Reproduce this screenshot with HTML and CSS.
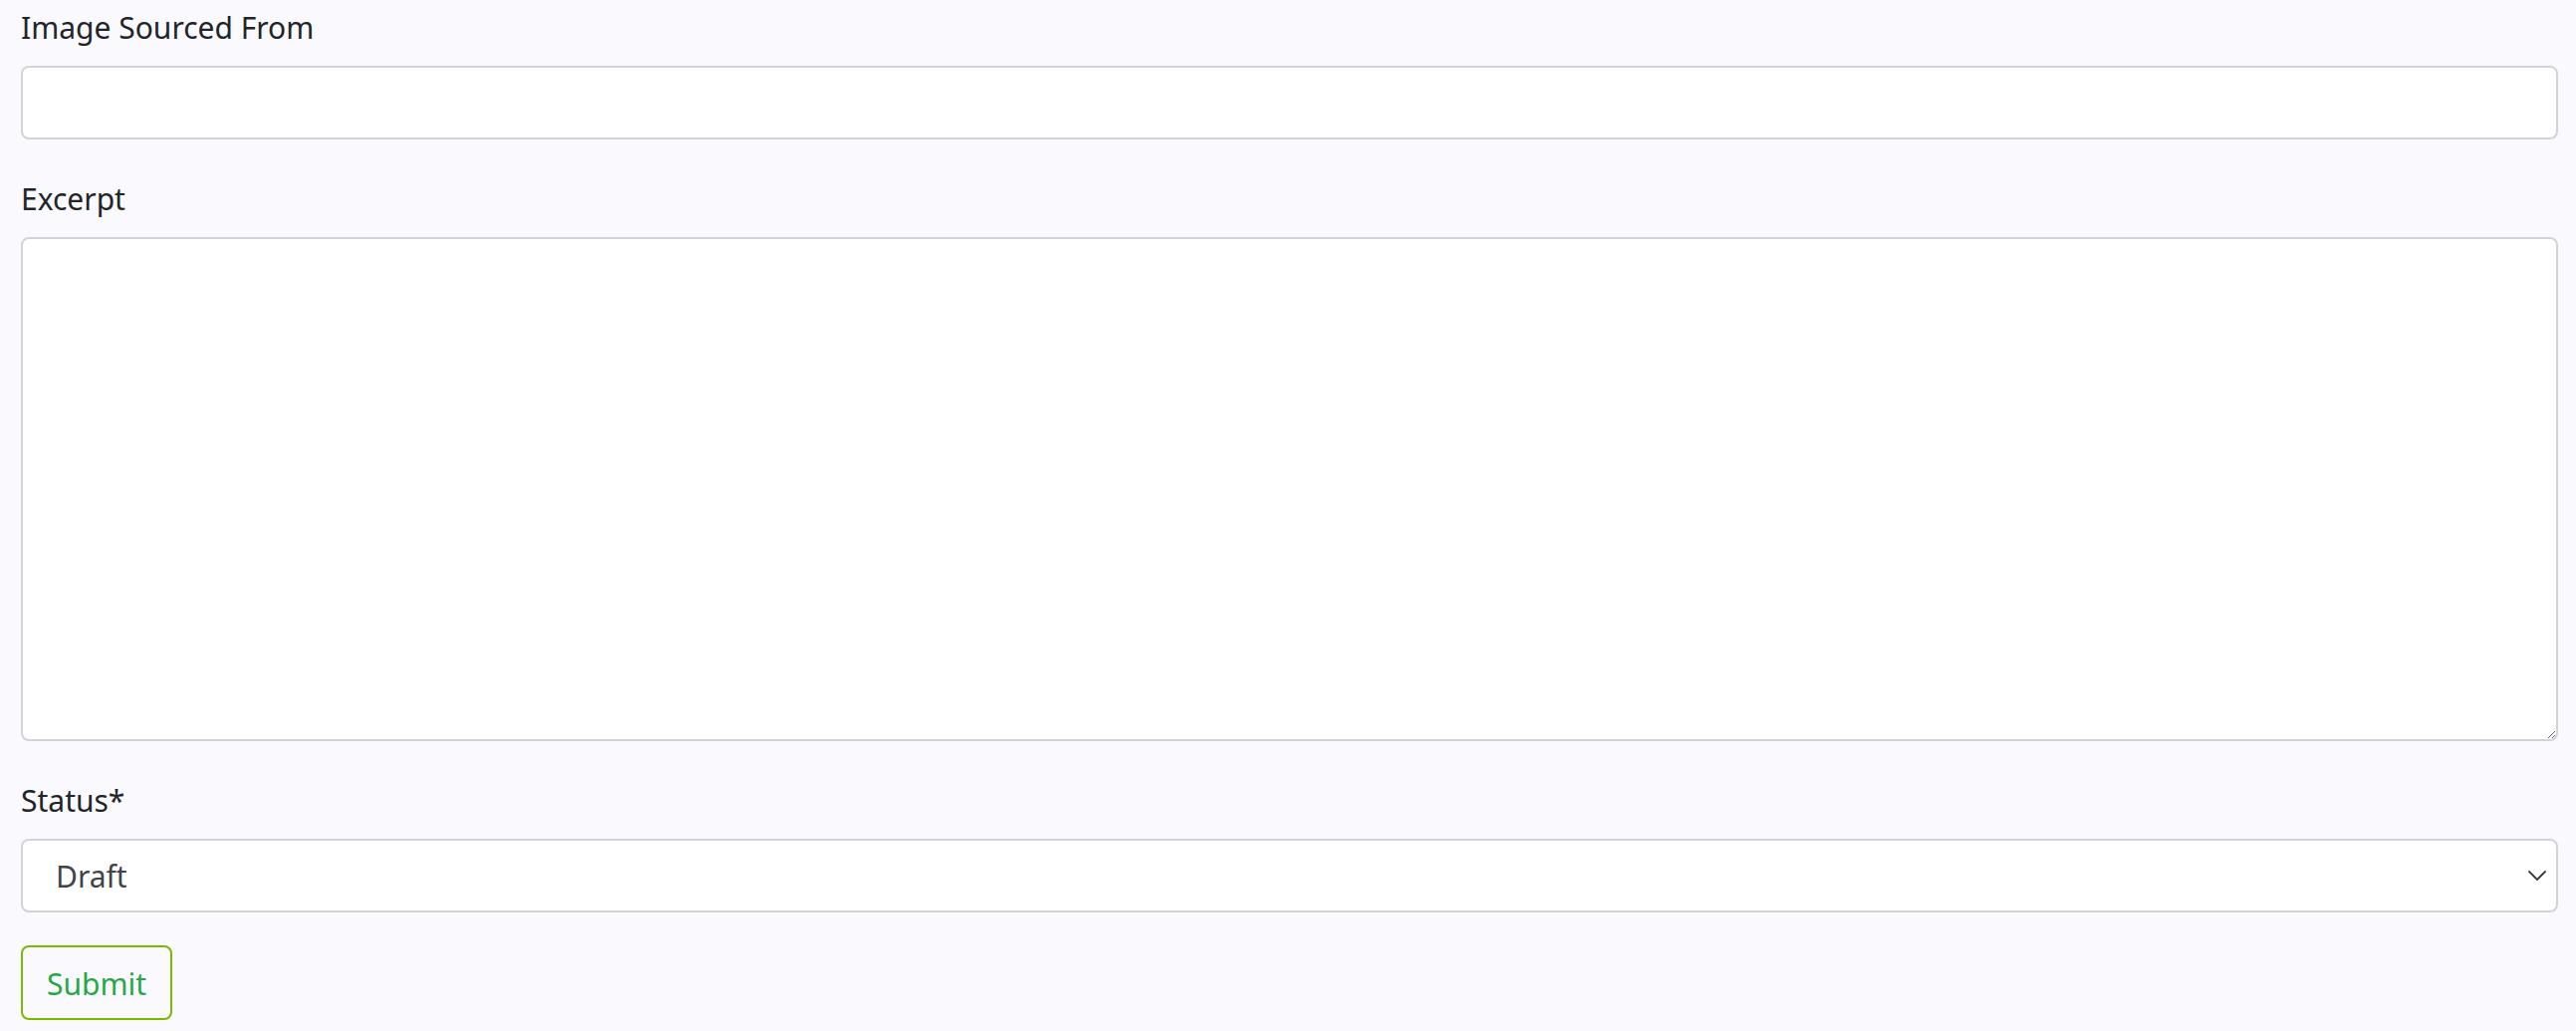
FILE: index.html
```html
<!DOCTYPE html>
<html lang="en">
<head>
<meta charset="utf-8">
<title>Form</title>
<link rel="stylesheet" href="styles.css">
</head>
<body>
<form class="form">
  <div class="field">
    <label class="label" for="src">Image Sourced From</label>
    <input class="control" id="src" type="text">
  </div>
  <div class="field">
    <label class="label" for="excerpt">Excerpt</label>
    <textarea class="control area" id="excerpt"></textarea>
  </div>
  <div class="field field-last">
    <label class="label" for="status">Status*</label>
    <select class="control select" id="status">
      <option>Draft</option>
      <option>Published</option>
    </select>
  </div>
  <button class="btn" type="button">Submit</button>
</form>
</body>
</html>
```

FILE: styles.css
```css
html, body {
  margin: 0;
  padding: 0;
  background: #f9f9fe;
}
body {
  font-family: "Noto Sans", "Open Sans", "Liberation Sans", sans-serif;
  font-size: 30px;
  color: #212529;
}
.form {
  padding: 0 18px 0 21px;
  display: flex;
  flex-direction: column;
  align-items: flex-start;
}
.field {
  width: 100%;
  margin-bottom: 32px;
}
.field-last {
  margin-bottom: 33px;
}
.label {
  display: block;
  line-height: 48px;
  padding-top: 4px;
  margin-bottom: 14px;
}
.control {
  display: block;
  box-sizing: border-box;
  width: 100%;
  height: 74px;
  margin: 0;
  padding: 12px 24px;
  font: inherit;
  line-height: 48px;
  color: #495057;
  background: #fff;
  border: 2px solid #d0d4da;
  border-radius: 8px;
  outline: none;
}
.area {
  height: 506px;
  resize: vertical;
}
.select {
  appearance: none;
  -webkit-appearance: none;
  padding: 2px 60px 0 33px;
  color: #3f444a;
  background-image: url("data:image/svg+xml,%3csvg xmlns='http://www.w3.org/2000/svg' viewBox='0 0 18 10'%3e%3cpath fill='none' stroke='%23343a40' stroke-width='1.8' stroke-linecap='round' stroke-linejoin='round' d='M1 1l8 8 8-8'/%3e%3c/svg%3e");
  background-repeat: no-repeat;
  background-position: right 10px center;
  background-size: 18px 10px;
}
.btn {
  box-sizing: border-box;
  height: 75px;
  padding: 2px 24px 0;
  font: inherit;
  line-height: 48px;
  color: #28a745;
  background: transparent;
  border: 2px solid #7cb800;
  border-radius: 8px;
}
```
